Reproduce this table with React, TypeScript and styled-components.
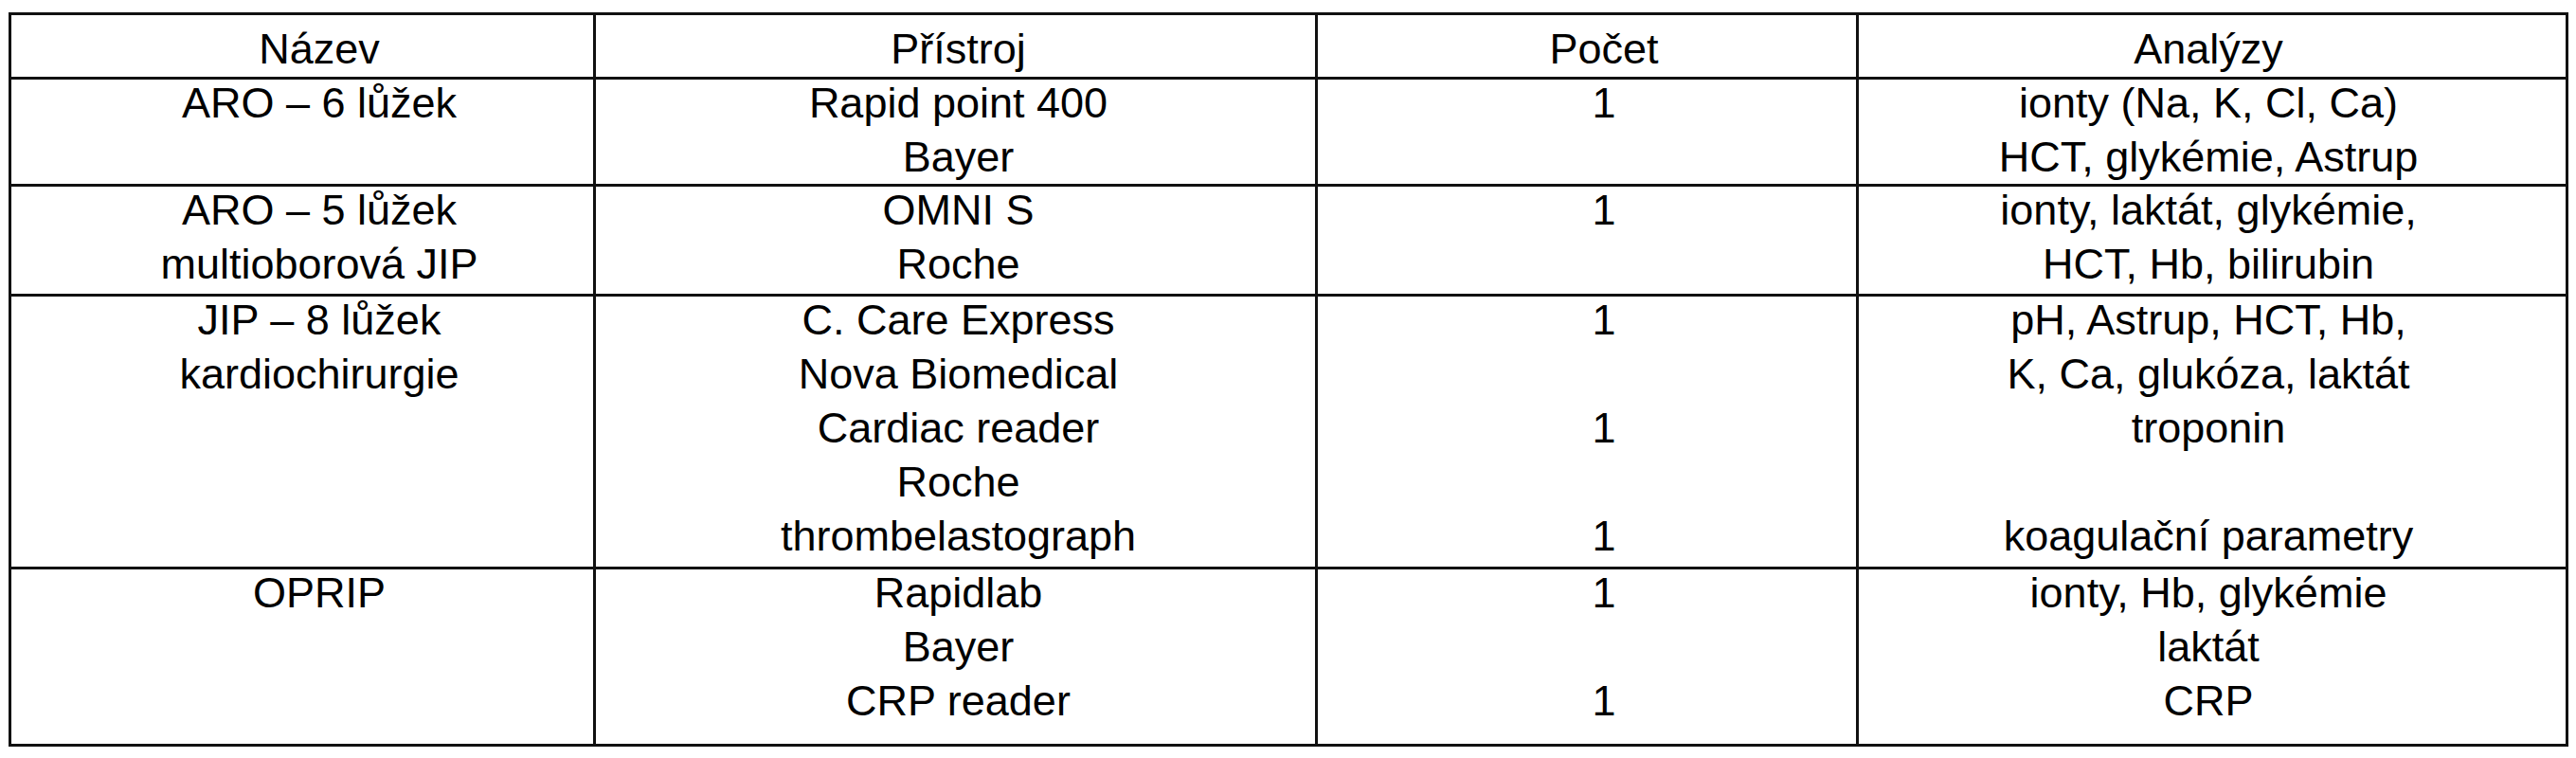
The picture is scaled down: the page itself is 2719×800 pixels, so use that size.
import React from "react";
import styled, { createGlobalStyle } from "styled-components";

const GlobalStyle = createGlobalStyle`
  html, body {
    margin: 0;
    padding: 0;
    background: #ffffff;
  }
  body {
    font-family: "Liberation Sans", Arial, Helvetica, sans-serif;
    color: #000000;
  }
`;

const Page = styled.div`
  padding: 13px 0 0 9px;
`;

const Table = styled.table`
  border-collapse: collapse;
  table-layout: fixed;
  width: 2699px;
  font-family: "Liberation Sans", Arial, Helvetica, sans-serif;
  font-size: 45px;
  line-height: 57px;
  color: #000;
`;

const Col = styled.col<{ $w: number }>`
  width: ${(p) => p.$w}px;
`;

const HeadCell = styled.th<{ $shift: number }>`
  border: 3px solid #111;
  font-weight: normal;
  text-align: center;
  vertical-align: top;
  padding: 7px 0 1px;
  padding-left: ${(p) => Math.max(p.$shift, 0) * 2}px;
  padding-right: ${(p) => Math.max(-p.$shift, 0) * 2}px;
  white-space: nowrap;
`;

const Cell = styled.td<{ $shift: number; $padBottom: number }>`
  border: 3px solid #111;
  text-align: center;
  vertical-align: top;
  padding: 0 0 ${(p) => p.$padBottom}px;
  padding-left: ${(p) => Math.max(p.$shift, 0) * 2}px;
  padding-right: ${(p) => Math.max(-p.$shift, 0) * 2}px;
  white-space: nowrap;
`;

const Lines = styled.div`
  margin-top: -4px;
`;

const Line = styled.div`
  height: 57px;
`;

const columns = [
  { title: "Název", width: 617, shift: 18 },
  { title: "Přístroj", width: 762, shift: 3 },
  { title: "Počet", width: 571, shift: 18 },
  { title: "Analýzy", width: 749, shift: -4 },
];

type Row = { cells: string[][]; padBottom: number };

const rows: Row[] = [
  {
    padBottom: 0,
    cells: [
      ["ARO – 6 lůžek"],
      ["Rapid point 400", "Bayer"],
      ["1"],
      ["ionty (Na, K, Cl, Ca)", "HCT, glykémie, Astrup"],
    ],
  },
  {
    padBottom: 3,
    cells: [
      ["ARO – 5 lůžek", "multioborová JIP"],
      ["OMNI S", "Roche"],
      ["1"],
      ["ionty, laktát, glykémie,", "HCT, Hb, bilirubin"],
    ],
  },
  {
    padBottom: 4,
    cells: [
      ["JIP – 8 lůžek", "kardiochirurgie"],
      ["C. Care Express", "Nova Biomedical", "Cardiac reader", "Roche", "thrombelastograph"],
      ["1", "", "1", "", "1"],
      ["pH, Astrup, HCT, Hb,", "K, Ca, glukóza, laktát", "troponin", "", "koagulační parametry"],
    ],
  },
  {
    padBottom: 17,
    cells: [
      ["OPRIP"],
      ["Rapidlab", "Bayer", "CRP reader"],
      ["1", "", "1"],
      ["ionty, Hb, glykémie", "laktát", "CRP"],
    ],
  },
];

export default function App() {
  return (
    <>
      <GlobalStyle />
      <Page>
        <Table>
          <colgroup>
            {columns.map((c) => (
              <Col key={c.title} $w={c.width} />
            ))}
          </colgroup>
          <thead>
            <tr>
              {columns.map((c) => (
                <HeadCell key={c.title} $shift={c.shift}>
                  {c.title}
                </HeadCell>
              ))}
            </tr>
          </thead>
          <tbody>
            {rows.map((r, ri) => (
              <tr key={ri}>
                {r.cells.map((lines, ci) => (
                  <Cell key={ci} $shift={columns[ci].shift} $padBottom={r.padBottom}>
                    <Lines>
                      {lines.map((l, li) => (
                        <Line key={li}>{l}</Line>
                      ))}
                    </Lines>
                  </Cell>
                ))}
              </tr>
            ))}
          </tbody>
        </Table>
      </Page>
    </>
  );
}
